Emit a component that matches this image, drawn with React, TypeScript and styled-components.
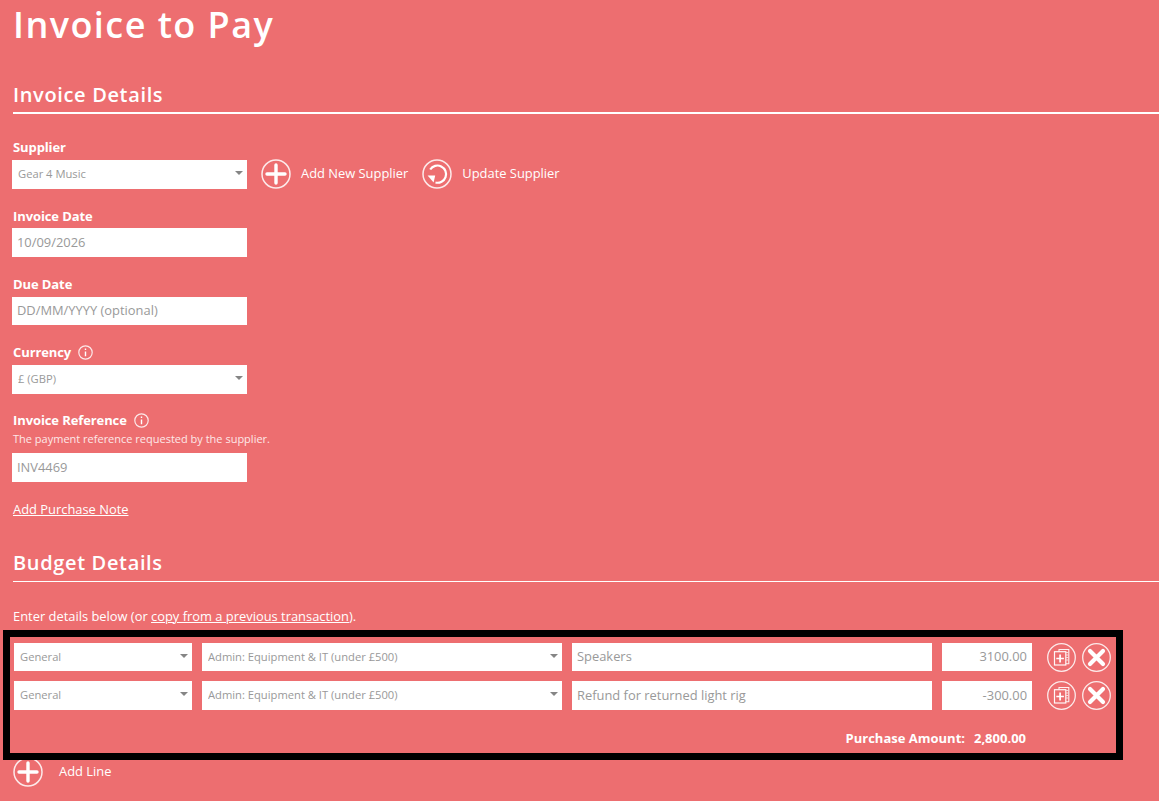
import React from 'react'
import styled, { createGlobalStyle } from 'styled-components'

const GlobalStyle = createGlobalStyle`
  html, body {
    margin: 0;
    padding: 0;
    background: #ed6e70;
    overflow: hidden;
  }
  * { box-sizing: border-box; }
`

const Page = styled.div`
  width: 1159px;
  height: 801px;
  overflow: hidden;
  background: #ed6e70;
  color: #fff;
  font-family: 'Open Sans', 'Liberation Sans', sans-serif;
  font-size: 13px;
`

const Title = styled.h1`
  margin: 0;
  padding: 0 0 0 13px;
  height: 50px;
  font-size: 36px;
  line-height: 50px;
  font-weight: 600;
  letter-spacing: 1.45px;
`

const SectionHead = styled.h2<{ $thin?: boolean; $top: number }>`
  margin: ${p => p.$top}px 0 0 13px;
  height: 33px;
  font-size: 20px;
  line-height: 27px;
  font-weight: 600;
  letter-spacing: 0.65px;
  border-bottom: ${p => (p.$thin ? 1 : 2)}px solid #fff;
`

const Field = styled.div<{ $top: number }>`
  margin: ${p => p.$top}px 0 0 12px;
`

const Label = styled.label<{ $below?: number }>`
  display: flex;
  align-items: center;
  gap: 7px;
  height: 18px;
  margin-bottom: ${p => p.$below ?? 3}px;
  margin-left: 1px;
  font-size: 13px;
  font-weight: 700;
  line-height: 18px;
  letter-spacing: -0.1px;
`

const Help = styled.div`
  height: 14px;
  margin: 0 0 7px 1px;
  font-size: 11px;
  line-height: 14px;
  color: #fde8e8;
`

const ControlRow = styled.div`
  display: flex;
  align-items: center;
`

const SelectWrap = styled.div<{ $width: number }>`
  position: relative;
  width: ${p => p.$width}px;
  height: 29px;
  flex: none;
  background: #fff;

  &::after {
    content: '';
    position: absolute;
    right: 4px;
    top: 11px;
    border-style: solid;
    border-width: 4px 4.5px 0;
    border-color: #858585 transparent transparent;
  }
`

const Select = styled.select`
  appearance: none;
  width: 100%;
  height: 100%;
  padding: 0 16px 2px 6px;
  border: 0;
  outline: 0;
  background: transparent;
  color: #999;
  font-family: 'Open Sans', 'Liberation Sans', sans-serif;
  font-size: 11.2px;
`

const TextInput = styled.input<{ $width: number; $height?: number; $right?: boolean }>`
  display: block;
  width: ${p => p.$width}px;
  height: ${p => p.$height ?? 29}px;
  flex: none;
  padding: 0 5px 2px;
  border: 0;
  outline: 0;
  background: #fff;
  color: #999;
  font-family: 'Open Sans', 'Liberation Sans', sans-serif;
  font-size: 12.9px;
  text-align: ${p => (p.$right ? 'right' : 'left')};

  &::placeholder {
    color: #999;
    opacity: 1;
  }
`

const ActionLink = styled.a`
  display: flex;
  align-items: center;
  gap: 10px;
  color: #fff;
  font-size: 12.9px;
  font-weight: 400;
  cursor: pointer;
`

const ActionText = styled.span`
  margin-top: -2px;
`

const SupplierActions = styled.div`
  display: flex;
  align-items: center;
  gap: 14px;
  margin-left: 14px;
`

const TextLink = styled.a`
  color: #fff;
  text-decoration: underline;
  cursor: pointer;
`

const NoteLink = styled(TextLink)`
  display: block;
  margin: 18px 0 0 13px;
  height: 18px;
  font-size: 12.9px;
  line-height: 18px;
`

const Intro = styled.p`
  margin: 25px 0 0 13px;
  height: 18px;
  font-size: 12.9px;
  line-height: 18px;
`

const LinesBox = styled.div`
  position: relative;
  z-index: 1;
  width: 1120px;
  height: 130px;
  margin: 5px 0 0 3px;
  padding: 6px 4px 0 4px;
  border: 7px solid #000;
`

const Line = styled.div`
  display: flex;
  align-items: center;
  gap: 10px;
  height: 29px;
  margin-bottom: 10px;

  &:first-child {
    height: 28px;
  }

  & > div,
  & > input {
    height: 100%;
  }

  & > div:nth-child(5) {
    height: 29px;
  }
`

const LineIcons = styled.div`
  display: flex;
  align-items: center;
  gap: 6px;
  margin-left: 5px;
`

const Total = styled.div`
  display: flex;
  justify-content: flex-end;
  gap: 9px;
  margin-top: 19px;
  padding-right: 86px;
  font-size: 13px;
  font-weight: 700;
  line-height: 18px;
`

const AddLine = styled(ActionLink)`
  margin: -3px 0 0 13px;
  gap: 16px;
`

const RoundSvg = styled.svg<{ $size: number }>`
  display: block;
  flex: none;
  width: ${p => p.$size}px;
  height: ${p => p.$size}px;
`

const PlusIcon = () => (
  <RoundSvg $size={30} viewBox="0 0 30 30" fill="none" stroke="#fff">
    <circle cx="15" cy="15" r="14" strokeOpacity="0.85" strokeWidth="1.5" />
    <path d="M15 6v18M6 15h18" strokeWidth="3.4" strokeLinecap="round" />
  </RoundSvg>
)

const RefreshIcon = () => (
  <RoundSvg $size={30} viewBox="0 0 30 30" fill="none" stroke="#fff">
    <circle cx="15" cy="15" r="14" strokeOpacity="0.85" strokeWidth="1.5" />
    <path d="M8.2 10.5A8.6 8.6 0 1 1 13.5 23.5" strokeWidth="2.2" />
    <path d="M5.6 16.4l7.6 0-1.6 7.2z" fill="#fff" stroke="none" />
  </RoundSvg>
)

const CopyIcon = () => (
  <RoundSvg $size={29} viewBox="0 0 29 29" fill="none" stroke="#fff">
    <circle cx="14.5" cy="14.5" r="13.8" strokeOpacity="0.85" strokeWidth="1.3" />
    <path d="M12 8.5V6.5h9.8v14.2H19" strokeOpacity="0.9" strokeWidth="1.1" />
    <path d="M19.2 9.5h2M19.2 12h2M19.2 14.5h2M19.2 17h2" strokeOpacity="0.8" strokeWidth="0.9" />
    <rect x="7.5" y="8.7" width="11.3" height="13.3" strokeOpacity="0.95" strokeWidth="1.2" />
    <path d="M13.1 11.5v8M9.3 15.5h7.6" strokeWidth="1.7" />
  </RoundSvg>
)

const CloseIcon = () => (
  <RoundSvg $size={29} viewBox="0 0 29 29" fill="none" stroke="#fff">
    <circle cx="14.5" cy="14.5" r="13.8" strokeOpacity="0.85" strokeWidth="1.3" />
    <path d="M8 8l13 13M21 8L8 21" strokeWidth="4.2" strokeLinecap="round" />
  </RoundSvg>
)

const InfoIcon = () => (
  <RoundSvg $size={15} viewBox="0 0 15 15" fill="none" stroke="#fff">
    <circle cx="7.5" cy="7.5" r="6.7" strokeOpacity="0.85" strokeWidth="1.2" />
    <path d="M7.5 6.4v4.8M7.5 3.5v1.5" strokeWidth="1.4" />
  </RoundSvg>
)

const Dropdown = ({ width, value }: { width: number; value: string }) => (
  <SelectWrap $width={width}>
    <Select defaultValue={value}>
      <option>{value}</option>
    </Select>
  </SelectWrap>
)

const lines = [
  { description: 'Speakers', amount: '3100.00' },
  { description: 'Refund for returned light rig', amount: '-300.00' },
]

function App() {
  return (
    <Page>
      <GlobalStyle />
      <Title>Invoice to Pay</Title>

      <SectionHead $top={31}>Invoice Details</SectionHead>

      <Field $top={24}>
        <Label>Supplier</Label>
        <ControlRow>
          <Dropdown width={235} value="Gear 4 Music" />
          <SupplierActions>
            <ActionLink>
              <PlusIcon />
              <ActionText>Add New Supplier</ActionText>
            </ActionLink>
            <ActionLink>
              <RefreshIcon />
              <ActionText>Update Supplier</ActionText>
            </ActionLink>
          </SupplierActions>
        </ControlRow>
      </Field>

      <Field $top={18}>
        <Label>Invoice Date</Label>
        <TextInput $width={235} defaultValue="10/09/2026" />
      </Field>

      <Field $top={18}>
        <Label $below={4}>Due Date</Label>
        <TextInput $width={235} $height={28} placeholder="DD/MM/YYYY (optional)" />
      </Field>

      <Field $top={18}>
        <Label $below={4}>
          Currency
          <InfoIcon />
        </Label>
        <ControlRow>
          <Dropdown width={235} value="£ (GBP)" />
        </ControlRow>
      </Field>

      <Field $top={17}>
        <Label>
          Invoice Reference
          <InfoIcon />
        </Label>
        <Help>The payment reference requested by the supplier.</Help>
        <TextInput $width={235} defaultValue="INV4469" />
      </Field>

      <NoteLink>Add Purchase Note</NoteLink>

      <SectionHead $top={31} $thin>
        Budget Details
      </SectionHead>

      <Intro>
        Enter details below (or <TextLink>copy from a previous transaction</TextLink>).
      </Intro>

      <LinesBox>
        {lines.map(line => (
          <Line key={line.description}>
            <Dropdown width={178} value="General" />
            <Dropdown width={360} value="Admin: Equipment & IT (under £500)" />
            <TextInput $width={360} defaultValue={line.description} />
            <TextInput $width={90} $right defaultValue={line.amount} />
            <LineIcons>
              <CopyIcon />
              <CloseIcon />
            </LineIcons>
          </Line>
        ))}
        <Total>
          <span>Purchase Amount:</span>
          <span>2,800.00</span>
        </Total>
      </LinesBox>

      <AddLine>
        <PlusIcon />
        <ActionText>Add Line</ActionText>
      </AddLine>
    </Page>
  )
}

export default App
